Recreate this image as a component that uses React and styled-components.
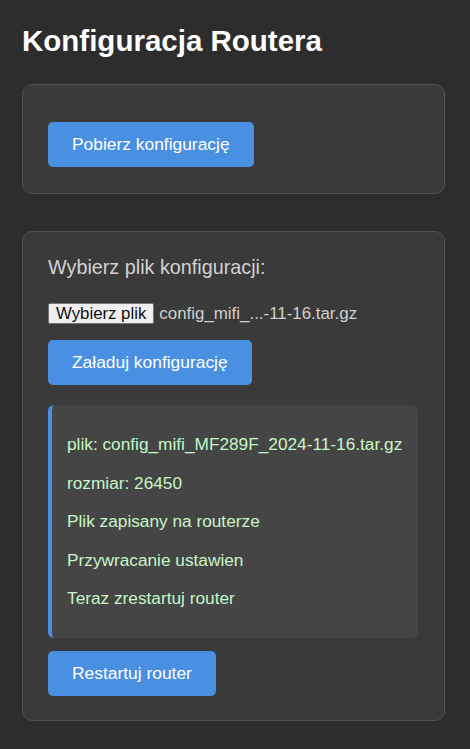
import React from 'react';
import styled, { createGlobalStyle } from 'styled-components';

const GlobalStyle = createGlobalStyle`
  body {
    margin: 0;
    background: #2d2d2d;
    font-family: "Liberation Sans", Arial, sans-serif;
  }
`;

const Page = styled.div`
  padding: 0 25px 1px 22px;
  min-height: 100vh;
  box-sizing: border-box;
`;

const Title = styled.h1`
  margin: 24px 0 26px;
  font-size: 29.5px;
  font-weight: 700;
  color: #ffffff;
`;

const Card = styled.section`
  background: #3a3a3a;
  border: 1px solid #525252;
  border-radius: 10px;
  padding: 24px 25px ${(p) => p.$bottom || 24}px;
  margin-bottom: 37px;
`;

const Button = styled.button`
  display: block;
  height: 45px;
  margin-top: ${(p) => p.$gap}px;
  padding: 0 24px;
  border: none;
  border-radius: 5px;
  background: #4a90e2;
  color: #ffffff;
  font-family: inherit;
  font-size: 17.4px;
  cursor: pointer;
`;

const Label = styled.div`
  font-size: 19.8px;
  color: #d2d2d2;
  margin-bottom: 24px;
`;

const FileRow = styled.div`
  display: flex;
  align-items: center;
  gap: 5px;
  height: 21px;
`;

const FileButton = styled.span`
  box-sizing: border-box;
  height: 21px;
  padding: 0 7px;
  line-height: 19px;
  background: #efefef;
  border: 1px solid #767676;
  border-radius: 2px;
  color: #111;
  font-size: 16.8px;
`;

const FileName = styled.span`
  font-size: 16.9px;
  color: #d0d0d0;
`;

const StatusBox = styled.div`
  margin-top: 20px;
  padding: 12px 15px;
  background: #454545;
  border-left: 4px solid #4a90e2;
  border-radius: 6px;
  margin-right: 1px;

  p {
    margin: 16px 0;
    font-size: 17.25px;
    line-height: 22.5px;
    color: #c8f5c8;
  }
`;

const status = [
  'plik: config_mifi_MF289F_2024-11-16.tar.gz',
  'rozmiar: 26450',
  'Plik zapisany na routerze',
  'Przywracanie ustawien',
  'Teraz zrestartuj router',
];

export default function App() {
  return (
    <>
      <GlobalStyle />
      <Page>
        <Title>Konfiguracja Routera</Title>
        <Card $bottom={26}>
          <Button $gap={13}>Pobierz konfigurację</Button>
        </Card>
        <Card>
          <Label>Wybierz plik konfiguracji:</Label>
          <FileRow>
            <FileButton>Wybierz plik</FileButton>
            <FileName>config_mifi_...-11-16.tar.gz</FileName>
          </FileRow>
          <Button $gap={16}>Załaduj konfigurację</Button>
          <StatusBox>
            {status.map((line) => (
              <p key={line}>{line}</p>
            ))}
          </StatusBox>
          <Button $gap={13}>Restartuj router</Button>
        </Card>
      </Page>
    </>
  );
}
